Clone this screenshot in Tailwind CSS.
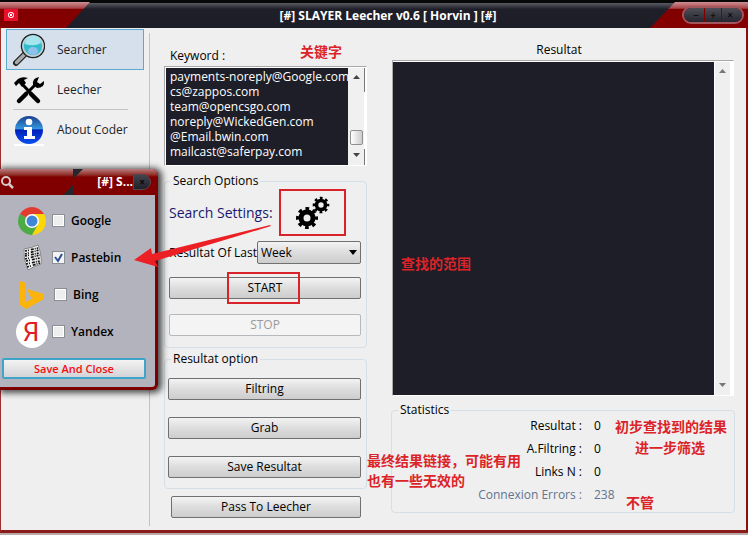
<!DOCTYPE html>
<html lang="en">
<head>
<meta charset="utf-8">
<title>SLAYER Leecher</title>
<script src="https://cdn.jsdelivr.net/npm/@tailwindcss/browser@4"></script>
</head>
<body class="bg-[#b9a9a9] font-['Open_Sans','Noto_Sans_CJK_SC',sans-serif] text-xs leading-4 text-black">
<div class="relative flex min-h-screen flex-col pb-[2px]">

  <header class="relative flex h-7 items-center justify-center border-t-[3px] border-[#080808] bg-linear-to-b from-[#5b5b63] via-[#1f1f29] via-25% to-[#1e1e28]">
    <svg class="absolute left-0 -top-px" width="90" height="26" viewBox="0 0 90 26" aria-hidden="true">
      <defs><linearGradient id="r" x1="0" y1="0" x2="0" y2="1"><stop offset="0" stop-color="#d08f93"/><stop offset=".24" stop-color="#a5444a"/><stop offset=".28" stop-color="#800000"/><stop offset="1" stop-color="#860000"/></linearGradient></defs>
      <path d="M0 0H90L66 26H0Z" fill="url(#r)"/>
      <rect x="4" y="7" width="14" height="12" fill="#e8112d"/><circle cx="11" cy="13" r="3" fill="#fff"/><circle cx="11" cy="13" r="1.7" fill="none" stroke="#e8112d"/>
    </svg>
    <h1 class="pl-7 text-[12px] font-bold text-white">[#] SLAYER Leecher v0.6 [ Horvin ] [#]</h1>
    <svg class="absolute -top-px right-0" width="98" height="26" viewBox="0 0 98 26" aria-hidden="true">
      <path d="M25 0H98V26H0Z" fill="url(#r)"/>
    </svg>
    <div class="absolute right-1 top-[3px] flex h-[18px] w-[62px] overflow-hidden rounded-full border-2 border-[#a0565c] bg-[#800000] text-[10px] leading-3 text-black">
      <button aria-label="Minimize" class="mr-px flex-1 bg-linear-to-b from-[#4e4e58] to-[#262630] pl-1">−</button>
      <button aria-label="Maximize" class="mr-px flex-1 bg-linear-to-b from-[#4e4e58] to-[#262630]">+</button>
      <button aria-label="Close" class="flex-1 bg-linear-to-b from-[#4e4e58] to-[#262630] pr-1">×</button>
    </div>
  </header>

  <main class="flex flex-1 border-b-[3px] border-l border-r-2 border-b-[#8b1c1c] border-l-[#a03030] border-r-[#8b0f0f] bg-[#efefef]">
    <nav class="w-[143px] shrink-0 pl-[5px] pt-px text-xs">
      <a href="#" class="flex h-[41px] items-center gap-3 border border-[#5aa9d0] bg-[#d6e0ec] pl-[6px] text-[#1e2428]">
        <svg width="32" height="34" viewBox="0 0 32 34" aria-hidden="true"><path d="M3 30L12 21" stroke="#222" stroke-width="6" stroke-linecap="round"/><path d="M3.500 29.500L12 21" stroke="#aaa" stroke-width="3.500" stroke-linecap="round"/><circle cx="20" cy="13" r="11.500" fill="#35bccb" stroke="#222" stroke-width="1.500"/><circle cx="20" cy="13" r="10" fill="none" stroke="#c8d0d4" stroke-width="1.600"/><path d="M12 11a8 8 0 0 1 16-1q-7 4-16 1Z" fill="#a5e6ee"/><ellipse cx="20" cy="18" rx="5" ry="4" fill="#8fc0ee"/></svg>
        Searcher</a>
      <a href="#" class="flex h-[39px] items-center gap-3 pl-[7px] text-[#1e2428]">
        <svg width="32" height="30" viewBox="0 0 32 30" aria-hidden="true"><path d="M1 8L5 4Q9 1 15 3L11 5L13 8L9 12L6 8L3 11Z"/><path d="M10 10L25 26" stroke="#000" stroke-width="3"/><path d="M18 19L25 26" stroke="#000" stroke-width="4.500" stroke-linecap="round"/><path d="M6 26L13 19" stroke="#000" stroke-width="4.500" stroke-linecap="round"/><path d="M13 19L24 8" stroke="#000" stroke-width="3"/><path d="M20 10Q19 3 26 2L24 7L27 9L31 6Q32 13 24 13Z"/></svg>
        Leecher</a>
      <hr class="ml-[7px] w-[115px] border-[#c5c5c5]">
      <a href="#" class="flex h-10 items-center gap-3 pl-[7px] text-[#1e2428]">
        <svg width="32" height="32" viewBox="0 0 32 32" aria-hidden="true"><defs><linearGradient id="b" x1="0" y1="0" x2="0" y2="1"><stop offset="0" stop-color="#1a3f90"/><stop offset=".45" stop-color="#3496dc"/><stop offset=".5" stop-color="#0020b8"/><stop offset="1" stop-color="#0a50f0"/></linearGradient></defs><path d="M1 30h30v2H1Z" fill="#fff"/><circle cx="16" cy="16" r="14" fill="url(#b)"/><circle cx="16" cy="8" r="3.300" fill="#fff"/><path d="M11 13h8v9h3v3H11v-3h3v-6h-3Z" fill="#fff"/></svg>
        About Coder</a>
    </nav>

    <div class="ml-[5px] mt-[5px] mb-1 w-px shrink-0 bg-[#c2c2c2]"></div>

    <section class="ml-[14px] w-[203px] shrink-0 pt-5">
      <label for="kw" class="ml-[6px] block">Keyword :</label>
      <div class="mt-[2px] flex h-[100px] border border-[#a8a8a8] border-b-white border-r-white bg-white pl-px pt-px">
        <textarea id="kw" spellcheck="false" class="w-[182px] resize-none overflow-hidden whitespace-pre bg-[#1e1e28] pl-1 pt-px leading-[15px] text-white">payments-noreply@Google.com
cs@zappos.com
team@opencsgo.com
noreply@WickedGen.com
@Email.bwin.com
mailcast@saferpay.com</textarea>
        <div class="flex w-4 flex-col items-center bg-[#f0f0f0] py-[7px]">
          <svg width="7" height="5" aria-hidden="true"><path d="M0 4L3.500 0L7 4Z" fill="#444"/></svg>
          <span class="mt-auto mb-2 h-[15px] w-[13px] rounded-xs border border-[#909090] bg-linear-to-r from-white to-[#ccc]"></span>
          <svg width="7" height="5" aria-hidden="true"><path d="M0 0L3.500 4L7 0Z" fill="#444"/></svg>
        </div>
        <div class="flex flex-col justify-between"><i class="h-6 w-px bg-[#777]"></i><i class="h-4 w-px bg-[#777]"></i></div>
      </div>

      <fieldset class="mt-[7px] rounded-sm border border-[#d5dfe5] pb-[11px] pl-1 pr-[5px]">
        <legend class="ml-[2px] px-[2px]">Search Options</legend>
        <div class="flex h-[47px] items-center">
          <span class="text-sm text-[#191970]">Search Settings:</span>
          <button aria-label="Search settings" class="ml-auto mr-[15px] flex h-[47px] w-[67px] shrink-0 items-center justify-center border-2 border-[#d8232a]">
            <svg width="34" height="34" viewBox="0 0 34 34" fill="none" stroke="#000" aria-hidden="true"><circle cx="11" cy="22" r="6" stroke-width="5"/><circle cx="11" cy="22" r="9.300" stroke-width="3.400" stroke-dasharray="3.652 3.652" stroke-dashoffset="1.826"/><circle cx="25" cy="9" r="4.500" stroke-width="3.600"/><circle cx="25" cy="9" r="7" stroke-width="2.600" stroke-dasharray="2.749 2.749" stroke-dashoffset="1.374"/></svg>
          </button>
        </div>
        <div class="mt-[5px] flex h-[23px] items-center justify-between">
          <label for="last">Resultat Of Last</label>
          <div class="relative">
            <select id="last" class="h-[23px] w-[104px] appearance-none rounded-xs border border-[#707070] bg-linear-to-b from-[#f3f3f3] via-[#dddddd] via-50% to-[#cdcdcd] pl-[3px]"><option>Week</option></select>
            <svg class="pointer-events-none absolute right-1 top-[9px]" width="8" height="5" aria-hidden="true"><path d="M0 0H8L4 5Z"/></svg>
          </div>
        </div>
        <div class="relative mt-[13px]">
          <button class="block h-[22px] w-full rounded-xs border border-[#707070] bg-linear-to-b from-[#f3f3f3] via-[#dddddd] via-50% to-[#cdcdcd]">START</button>
          <i class="pointer-events-none absolute -top-[5px] left-[58px] h-8 w-[73px] border-2 border-[#d8232a]"></i>
        </div>
        <button disabled class="mt-[15px] block h-[22px] w-full rounded-xs border border-[#b5b9bc] bg-[#f4f4f4] text-[#9a9a9a]">STOP</button>
      </fieldset>

      <fieldset class="mt-[3px] rounded-sm border border-[#d5dfe5] pb-[10px] pl-[3px] pr-[5px]">
        <legend class="ml-[3px] px-[2px]">Resultat option</legend>
        <div class="flex flex-col gap-[17px] pt-[11px]">
          <button class="h-[22px] rounded-xs border border-[#707070] bg-linear-to-b from-[#f3f3f3] via-[#dddddd] via-50% to-[#cdcdcd]">Filtring</button>
          <button class="h-[22px] rounded-xs border border-[#707070] bg-linear-to-b from-[#f3f3f3] via-[#dddddd] via-50% to-[#cdcdcd]">Grab</button>
          <button class="h-[22px] rounded-xs border border-[#707070] bg-linear-to-b from-[#f3f3f3] via-[#dddddd] via-50% to-[#cdcdcd]">Save Resultat</button>
        </div>
      </fieldset>
      <div class="mt-[7px] flex pl-[7px] pr-[6px]">
        <button class="h-[22px] flex-1 rounded-xs border border-[#707070] bg-linear-to-b from-[#f3f3f3] via-[#dddddd] via-50% to-[#cdcdcd]">Pass To Leecher</button>
      </div>
    </section>

    <section class="ml-6 mr-[11px] flex flex-1 flex-col pb-[17px] pt-[14px]">
      <label for="res" class="mr-2 text-center">Resultat</label>
      <div class="ml-px mr-px mt-[2px] flex flex-1 border border-[#a8a8a8] border-b-white border-r-white bg-white pt-px">
        <textarea id="res" readonly class="min-w-0 flex-1 resize-none bg-[#1e1e28] text-white"></textarea>
        <div class="ml-px mr-[3px] flex w-[15px] flex-col items-center justify-between bg-[#efefef] py-[7px]">
          <svg width="7" height="5" aria-hidden="true"><path d="M0 4L3.500 0L7 4Z" fill="#777"/></svg>
          <svg width="7" height="5" aria-hidden="true"><path d="M0 0L3.500 4L7 0Z" fill="#777"/></svg>
        </div>
      </div>
      <fieldset class="mt-[6px] rounded-sm border border-[#d5dfe5] pb-[6px]">
        <legend class="ml-[6px] px-[2px]">Statistics</legend>
        <dl class="-mt-1 grid grid-cols-[190px_1fr] gap-x-3 leading-[23px]">
          <dt class="text-right">Resultat :</dt><dd>0</dd>
          <dt class="text-right">A.Filtring :</dt><dd>0</dd>
          <dt class="text-right">Links N :</dt><dd>0</dd>
          <dt class="text-right text-slate-500">Connexion Errors :</dt><dd class="text-slate-500">238</dd>
        </dl>
      </fieldset>
    </section>
  </main>

  <!-- Search engine picker, floating over the main window -->
  <section class="absolute left-0 top-[169px] w-[158px] rounded-r-md border-b-[3px] border-r-[3px] border-[#7c0000] bg-[#b3b3be] pb-2 font-semibold shadow-[2px_1px_6px_2px_#000000b0]">
    <header class="relative -mr-[3px] flex h-[26px] items-center justify-end overflow-hidden rounded-tr-md bg-linear-to-b from-[#b87c80] via-[#800000] via-30% to-[#800000] pr-[7px] text-white">
      <svg class="absolute left-0 top-0" width="90" height="26" viewBox="0 0 90 26" fill="none" aria-hidden="true"><path d="M73 0H83L74 9V26H63L73 16Z" fill="#26262e"/><circle cx="6" cy="12" r="4" stroke="#d8c8c8" stroke-width="2"/><path d="M9 15L13 19" stroke="#d8c8c8" stroke-width="2.500"/></svg>
      <h2 class="relative font-bold">[#] S...</h2>
      <button aria-label="Close" class="relative h-4 w-[18px] rounded-r-full border border-[#55454c] bg-linear-to-b from-[#44444e] to-[#20202a] text-[10px] leading-3 text-black">×</button>
    </header>
    <ul class="pt-[7px]">
      <li><label class="flex h-[37px] items-center pl-4">
        <svg class="mr-1" width="32" height="32" viewBox="0 0 32 32" aria-hidden="true"><path d="M3.880 9A14 14 0 0 1 28.120 9L16 16Z" fill="#e33b2e"/><path d="M28.120 9A14 14 0 0 1 16 30L16 16L16 9Z" fill="#fdd60a"/><path d="M3.880 9A14 14 0 0 0 16 30L22 19.500L16 16Z" fill="#4cab45"/><path d="M16 9H28.120L24 7H10Z" fill="#e33b2e"/><circle cx="16" cy="16" r="7" fill="#fff"/><circle cx="16" cy="16" r="5.500" fill="#3f86d8"/></svg>
        <input type="checkbox" class="mr-[6px] size-[13px] appearance-none border border-[#8a8f94] bg-[#eeeeee] ring-1 ring-inset ring-white">Google</label></li>
      <li><label class="flex h-[37px] items-center pl-4">
        <svg class="mr-1" width="32" height="32" viewBox="0 0 32 32" aria-hidden="true"><path d="M8 7Q16 6 22 3Q26 14 25 22Q18 24 12 28Q7 17 8 7Z" fill="#f4f4f4" stroke="#555" stroke-width=".6"/><path d="M9 9L22 6M9 12L23 8M9 14L23 11M9 17L24 13M10 19L24 16M10 22L24 19M11 25L24 21" stroke="#111" stroke-width="1.700" stroke-dasharray="2 1 1 2 3 1 1 1"/></svg>
        <span class="relative mr-[6px] flex"><input type="checkbox" checked class="size-[13px] appearance-none border border-[#8a8f94] bg-[#f4f4f4]"><svg class="pointer-events-none absolute left-0 top-0" width="13" height="13" aria-hidden="true"><path d="M3 6L6 10L10 3" fill="none" stroke="#2c4f96" stroke-width="2"/></svg></span>Pastebin</label></li>
      <li><label class="flex h-[37px] items-center pl-[18px]">
        <svg class="mr-1" width="32" height="32" viewBox="0 0 32 32" aria-hidden="true"><path d="M2 2L8 4V23L15 19L12 17L9 10L26 15V20L8 30L2 26Z" fill="#fdb40a"/></svg>
        <input type="checkbox" class="mr-[6px] size-[13px] appearance-none border border-[#8a8f94] bg-[#eeeeee] ring-1 ring-inset ring-white">Bing</label></li>
      <li><label class="flex h-[37px] items-center pl-4">
        <svg class="mr-1" width="32" height="32" viewBox="0 0 32 32" aria-hidden="true"><circle cx="16" cy="16" r="16" fill="#fff"/><text x="15" y="25" text-anchor="middle" font-family="Roboto, sans-serif" font-size="26" font-weight="400" fill="#e02020">Я</text></svg>
        <input type="checkbox" class="mr-[6px] size-[13px] appearance-none border border-[#8a8f94] bg-[#eeeeee] ring-1 ring-inset ring-white">Yandex</label></li>
    </ul>
    <div class="flex pl-[2px] pr-[9px] pt-2">
      <button class="h-[21px] flex-1 rounded-xs border-2 border-[#3fa5c8] bg-linear-to-b from-[#f3f3f3] to-[#d4d4d8] text-[11px] leading-4 text-[#f01010]">Save And Close</button>
    </div>
  </section>

  <!-- Annotations over the window -->
  <svg class="pointer-events-none absolute left-[130px] top-[220px]" width="145" height="48" viewBox="0 0 145 48" aria-hidden="true"><path d="M4 40L21 28L22 34L140 5L141 6L25 41L28 47Z" fill="#ec2024"/></svg>
  <div class="pointer-events-none font-['Noto_Sans_CJK_SC',sans-serif] text-sm leading-5 font-bold text-[#dc2428]">
    <p class="absolute left-[300px] top-[41px]">关键字</p>
    <p class="absolute left-[401px] top-[253px]">查找的范围</p>
    <p class="absolute left-[367px] top-[450px]">最终结果链接，可能有用<br>也有一些无效的</p>
    <p class="absolute left-[615px] top-[416px]">初步查找到的结果</p>
    <p class="absolute left-[635px] top-[437px]">进一步筛选</p>
    <p class="absolute left-[626px] top-[492px]">不管</p>
  </div>
</div>
</body>
</html>
